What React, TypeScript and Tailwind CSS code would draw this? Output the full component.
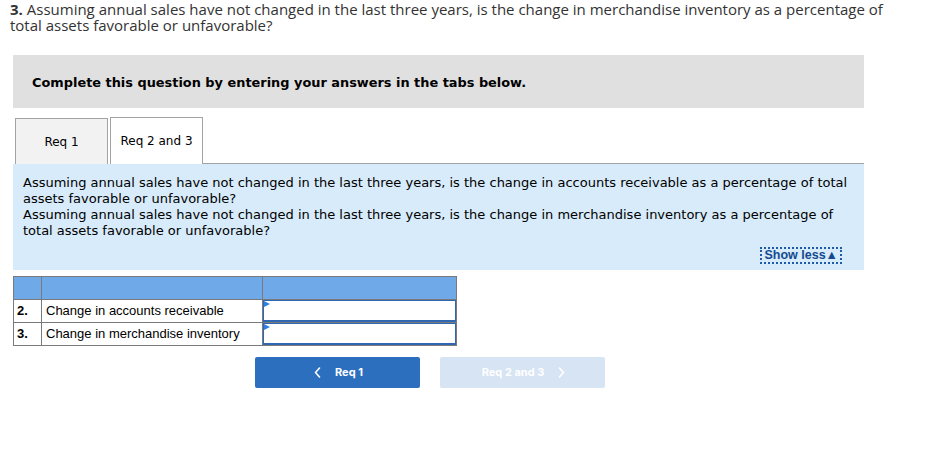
import React from 'react';

const question =
  'Assuming annual sales have not changed in the last three years, is the change in merchandise inventory as a percentage of total assets favorable or unfavorable?';

const rows = [
  { num: '2.', label: 'Change in accounts receivable' },
  { num: '3.', label: 'Change in merchandise inventory' },
];

function Chevron({ dir }: { dir: 'left' | 'right' }) {
  return (
    <svg width="7" height="11" viewBox="0 0 7 11" fill="none">
      <path
        d={dir === 'left' ? 'M5.5 1L1.5 5.5L5.5 10' : 'M1.5 1L5.5 5.5L1.5 10'}
        stroke="currentColor"
        strokeWidth="1.6"
        strokeLinecap="round"
        strokeLinejoin="round"
      />
    </svg>
  );
}

export default function App() {
  return (
    <div className="w-[933px] h-[473px] bg-white overflow-hidden">
      {/* Question */}
      <p className="pl-[10px] pr-[30px] pt-[1px] text-[15px] leading-[16px] text-[#333] font-['Open_Sans',sans-serif]">
        <span className="font-bold">3.</span> {question}
      </p>

      {/* Instructions */}
      <div className="ml-[13px] mt-[22px] w-[851px] h-[53px] bg-[#e0e0e0] pl-[19px] pt-[14px]">
        <span className="font-['DejaVu_Sans',Verdana,sans-serif] font-bold text-[12.9px] text-black">
          Complete this question by entering your answers in the tabs below.
        </span>
      </div>

      {/* Tabs */}
      <div className="ml-[13px] mt-[9px] w-[851px] flex items-end h-[47px] font-['DejaVu_Sans',Verdana,sans-serif] text-[12px] text-black">
        <div className="ml-[2px] w-[93px] h-[46px] bg-[#f2f2f2] border border-b-0 border-[#a3a3a3] flex items-center justify-center">
          Req 1
        </div>
        <div className="ml-[2px] w-[93px] h-[47px] bg-white border border-b-0 border-[#a3a3a3] flex items-center justify-center pb-[1px]">
          Req 2 and 3
        </div>
        <div className="flex-1 border-b border-[#a3a3a3]" />
      </div>

      {/* Requirement panel */}
      <div className="ml-[13px] w-[851px] h-[106px] bg-[#d7ebfa] pl-[10px] pr-[8px] pt-[11px] font-['DejaVu_Sans',Verdana,sans-serif] text-[13px] leading-[16px] text-black">
        <p>
          Assuming annual sales have not changed in the last three years, is the change in accounts receivable as a percentage of total assets favorable or unfavorable?
        </p>
        <p>{question}</p>
        <div className="flex justify-end mt-[8px] pr-[14px]">
          <span className="border-2 border-dotted border-[#1d5aa8] px-[2px] leading-[13px] font-['Liberation_Sans',Arial,sans-serif] font-bold text-[12.5px] text-[#134a8e]">
            Show less▲
          </span>
        </div>
      </div>

      {/* Answer table */}
      <table className="ml-[13px] mt-[6px] border-collapse font-['Liberation_Sans',Arial,sans-serif] text-[13px] text-black">
        <tbody>
          <tr className="h-[23px] bg-[#6fa9e8]">
            <td className="w-[28px] border border-[#7a7a7a]" />
            <td className="w-[221px] border border-[#7a7a7a]" />
            <td className="w-[194px] border border-[#7a7a7a]" />
          </tr>
          {rows.map((r) => (
            <tr key={r.num} className="h-[23px]">
              <td className="border border-[#7a7a7a] pl-[3px] font-bold">{r.num}</td>
              <td className="border border-[#7a7a7a] pl-[4px]">{r.label}</td>
              <td className="border border-[#7a7a7a] p-0 relative">
                <div className="h-[22px] border border-b-2 border-[#2f67b3] bg-white" />
                <svg className="absolute left-[1px] top-[1px]" width="6" height="6" viewBox="0 0 6 6">
                  <path d="M0 0L6 3L0 6Z" fill="#2f7fe0" />
                </svg>
              </td>
            </tr>
          ))}
        </tbody>
      </table>

      {/* Navigation */}
      <div className="ml-[255px] mt-[11px] flex gap-[20px] font-['Inter',sans-serif] text-[11px] font-bold text-white">
        <button className="w-[165px] h-[31px] rounded-[2px] bg-[#2d6fbf] flex items-center justify-center gap-[14px] pl-[2px]">
          <Chevron dir="left" />
          <span>Req 1</span>
        </button>
        <button className="w-[165px] h-[31px] rounded-[2px] bg-[#d6e4f3] flex items-center justify-center gap-[14px] pl-[2px]">
          <span>Req 2 and 3</span>
          <Chevron dir="right" />
        </button>
      </div>
    </div>
  );
}
